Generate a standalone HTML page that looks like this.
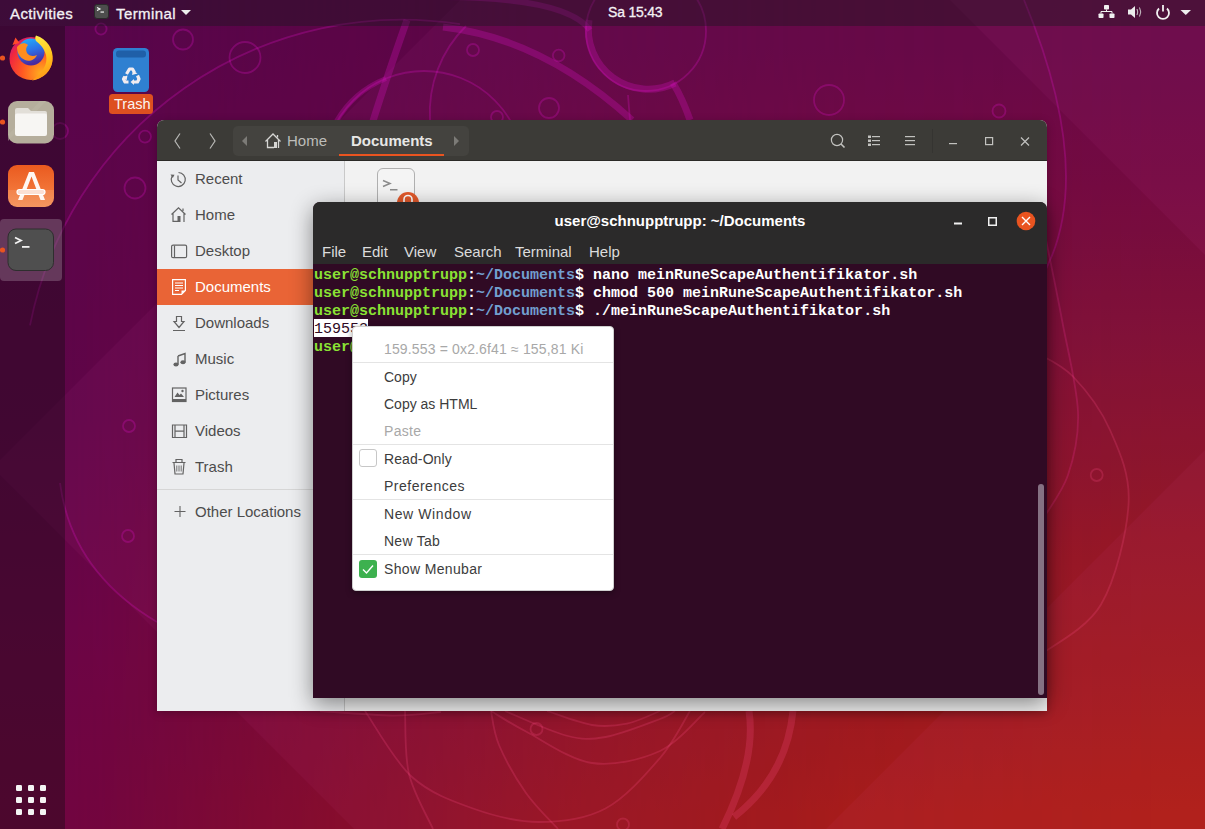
<!DOCTYPE html>
<html><head><meta charset="utf-8">
<style>
*{box-sizing:border-box;margin:0;padding:0}
html,body{width:1205px;height:829px;overflow:hidden;background:#5a004c}
body{position:relative;font-family:"Liberation Sans",sans-serif}
.abs{position:absolute}
#wp{left:0;top:0;width:1205px;height:829px;background:linear-gradient(to bottom,rgb(79,0,70) 0px,rgb(85,0,68) 220px,rgb(89,0,66) 427px,rgb(100,0,64) 627px,rgb(107,0,58) 829px)}
#wp2{left:0;top:0;width:1205px;height:829px;
 background:linear-gradient(to bottom,rgb(90,0,57) 47px,rgb(104,2,50) 187px,rgb(118,9,40) 337px,rgb(143,16,19) 567px,rgb(167,24,0) 812px);
 -webkit-mask-image:linear-gradient(to right,rgba(0,0,0,0) 65px,rgba(0,0,0,.35) 330px,rgba(0,0,0,.62) 570px,rgba(0,0,0,.86) 850px,#000 1205px);
 mask-image:linear-gradient(to right,rgba(0,0,0,0) 65px,rgba(0,0,0,.35) 330px,rgba(0,0,0,.62) 570px,rgba(0,0,0,.86) 850px,#000 1205px)}
#topbar{left:0;top:0;width:1205px;height:26px;background:rgba(15,27,23,.35);color:#fff}
#dock{left:0;top:26px;width:65px;height:803px;background:rgba(10,10,12,.36)}
.tb{position:absolute;top:0;height:26px;line-height:26px;font-weight:normal;color:#f4f2f4;white-space:nowrap;-webkit-text-stroke:0.3px #f4f2f4}
/* nautilus */
#naut{left:157px;top:120px;width:890px;height:591px;border-radius:7px 7px 0 0;overflow:hidden;background:#f2f2f2;box-shadow:0 2px 9px rgba(0,0,0,.25)}
#nhead{left:0;top:0;width:890px;height:41px;background:#3c3b37;border-bottom:1px solid #2b2a27}
#side{left:0;top:41px;width:188px;height:550px;background:#ecedef;border-right:1px solid #c9c9c9}
.si{position:absolute;left:0;width:188px;height:36px;line-height:36px;font-size:15px;color:#4c4c4c}
.si span{position:absolute;left:38px}
.si svg{position:absolute;left:13px;top:10px}
.si.sel{background:#e96436;color:#fff}
/* terminal */
#term{left:313px;top:202px;width:734px;height:496px;border-radius:7px 7px 0 0;overflow:hidden;background:#300a24;box-shadow:0 6px 22px rgba(0,0,0,.45)}
#thead{left:0;top:0;width:734px;height:62px;background:#2b2a2a}
.mi{position:absolute;top:39px;font-size:15px;color:#dcdcdc;line-height:22px}
#tx{left:1px;top:65px;font-family:"Liberation Mono",monospace;font-weight:bold;font-size:15px;line-height:18px;color:#fff;white-space:pre}
.g{color:#8ae234}.b{color:#729fcf}
/* menu */
#menu{left:352px;top:326px;width:262px;height:265px;background:#fff;border:1px solid #cfcfcf;border-radius:4px;box-shadow:0 2px 6px rgba(0,0,0,.35)}
.it{position:absolute;left:0;width:260px;height:27px;font-size:14px;line-height:27px;color:#3c3c3c}
.it span{position:absolute;left:31px;top:1px}
.sep{position:absolute;left:0;width:260px;height:1px;background:#e4e4e4}
</style></head><body>
<div id="wp" class="abs"></div>
<div id="wp2" class="abs"></div>
<svg id="wpl" class="abs" style="left:0;top:0" width="1205" height="829" viewBox="0 0 1205 829">
<g fill="#ff70d0" fill-opacity="0.048">
<polygon points="460,0 1205,0 1205,829 0,829 0,460"/>
<polygon points="1205,450 1205,829 826,829"/>
<polygon points="0,0 1205,0 1205,829 354,829 0,475"/>
<polygon points="950,0 1205,0 1205,255"/>
</g>
<g fill="none">
<path stroke="#d010b8" stroke-opacity="0.30" d="M30 325.4 A378.7 378.7 0 0 1 460 24.2" stroke-width="1.8"/>
<path stroke="#d010b8" stroke-opacity="0.30" d="M466 26 A122 122 0 0 0 430 120" stroke-width="1.8"/>
<path stroke="#d010b8" stroke-opacity="0.30" d="M1024 0 Q1099.0 181.0 1040 280" stroke-width="1.8"/>
<path stroke="#ff4f8a" stroke-opacity="0.22" d="M365.0 711.0 C372.8 722.0 394.0 760.8 412.0 777.0 C430.0 793.2 451.8 801.0 473.0 808.5 C494.2 816.0 516.9 822.0 539.0 822.0 C561.1 822.0 585.3 819.2 605.5 808.5 C625.7 797.8 645.9 774.2 660.0 758.0 C674.1 741.8 685.0 718.8 690.0 711.0" stroke-width="1.8"/>
<path stroke="#ff4f8a" stroke-opacity="0.22" d="M405.0 711.0 C405.7 721.5 404.3 754.3 409.0 774.0 C413.7 793.7 429.0 819.8 433.0 829.0" stroke-width="1.8"/>
<path stroke="#ff4f8a" stroke-opacity="0.22" d="M491.0 711.0 C492.3 716.7 493.2 731.3 499.0 745.0 C504.8 758.7 516.2 779.0 526.0 793.0 C535.8 807.0 552.7 823.0 558.0 829.0" stroke-width="1.8"/>
<path stroke="#ff4f8a" stroke-opacity="0.22" d="M491.0 711.0 C496.8 714.4 509.2 722.8 526.0 731.5 C542.8 740.2 569.7 759.8 592.0 763.0 C614.3 766.2 641.2 759.5 660.0 751.0 C678.8 742.5 697.5 718.5 705.0 712.0" stroke-width="1.8"/>
<path stroke="#ff4f8a" stroke-opacity="0.22" d="M505.0 711.0 C515.2 715.1 549.2 731.2 566.0 735.5 C582.8 739.8 589.8 739.8 605.5 737.0 C621.2 734.2 648.4 723.3 660.0 719.0 C671.6 714.7 672.5 712.3 675.0 711.0" stroke-width="1.8"/>
<path stroke="#ff4f8a" stroke-opacity="0.22" d="M547.0 711.0 C554.5 713.3 578.7 722.9 592.0 725.0 C605.3 727.1 615.7 725.9 627.0 723.6 C638.3 721.3 654.5 713.1 660.0 711.0" stroke-width="1.8"/>
<path stroke="#ff4f8a" stroke-opacity="0.22" d="M320.0 711.0 C332.2 711.8 372.8 715.4 393.0 715.6 C413.2 715.8 433.0 712.6 441.0 712.0" stroke-width="1.8"/>
<path stroke="#d010b8" stroke-opacity="0.30" d="M60 483 Q71.5 571.5 157 622" stroke-width="1.8"/>
<path stroke="#d010b8" stroke-opacity="0.30" d="M628 95 Q629.0 108.5 630 120" stroke-width="1.8"/>
<path stroke="#e8308f" stroke-opacity="0.26" d="M1046.0 240.0 C1048.7 253.3 1056.7 291.3 1062.0 320.0 C1067.3 348.7 1077.0 386.2 1078.0 412.0 C1079.0 437.8 1074.3 456.5 1068.0 475.0 C1061.7 493.5 1044.7 515.0 1040.0 523.0" stroke-width="1.8"/>
<path stroke="#ff4f8a" stroke-opacity="0.22" d="M1035.0 352.0 C1041.3 356.1 1060.5 363.5 1073.0 376.5 C1085.5 389.5 1100.7 408.9 1110.0 430.0 C1119.3 451.1 1130.1 473.9 1128.6 503.0 C1127.1 532.1 1115.8 579.2 1101.0 604.5 C1086.2 629.8 1050.2 646.6 1040.0 655.0" stroke-width="1.8"/>
<circle stroke="#d010b8" stroke-opacity="0.30" cx="101" cy="29" r="5.6" stroke-width="1.8"/>
<circle stroke="#d010b8" stroke-opacity="0.30" cx="183" cy="39.5" r="10" stroke-width="1.8"/>
<circle stroke="#d010b8" stroke-opacity="0.30" cx="245" cy="57.5" r="15.5" stroke-width="1.8"/>
<circle stroke="#d010b8" stroke-opacity="0.30" cx="145" cy="136.6" r="6" stroke-width="1.8"/>
<circle stroke="#d010b8" stroke-opacity="0.30" cx="135" cy="188" r="10.5" stroke-width="1.8"/>
<circle stroke="#d010b8" stroke-opacity="0.30" cx="60" cy="131" r="8" stroke-width="1.8"/>
<circle stroke="#d010b8" stroke-opacity="0.30" cx="473" cy="50" r="6" stroke-width="1.8"/>
<circle stroke="#d010b8" stroke-opacity="0.30" cx="558.7" cy="55.5" r="5.8" stroke-width="1.8"/>
<circle stroke="#d010b8" stroke-opacity="0.30" cx="549" cy="108" r="10" stroke-width="1.8"/>
<circle stroke="#d010b8" stroke-opacity="0.30" cx="497" cy="117" r="6" stroke-width="1.8"/>
<circle stroke="#d010b8" stroke-opacity="0.30" cx="829" cy="100" r="15" stroke-width="1.8"/>
<circle stroke="#d010b8" stroke-opacity="0.30" cx="999" cy="111" r="6.5" stroke-width="1.8"/>
<circle stroke="#d010b8" stroke-opacity="0.30" cx="129" cy="426" r="6" stroke-width="1.8"/>
<circle stroke="#d010b8" stroke-opacity="0.30" cx="128" cy="536" r="6" stroke-width="1.8"/>
<circle stroke="#ff4f8a" stroke-opacity="0.22" cx="536.5" cy="729" r="6" stroke-width="1.8"/>
<circle stroke="#ff4f8a" stroke-opacity="0.22" cx="623" cy="824.5" r="6" stroke-width="1.8"/>
<circle stroke="#ff4f8a" stroke-opacity="0.22" cx="1096.7" cy="475" r="6" stroke-width="1.8"/>
<circle stroke="#d010b8" stroke-opacity="0.30" cx="424" cy="171" r="100" stroke-width="1.8"/>
<path stroke="#d010b8" stroke-opacity="0.30" d="M336 122 A100 100 0 0 1 386 78.5" stroke-width="5"/>
<circle stroke="#d010b8" stroke-opacity="0.30" cx="646" cy="31" r="60" stroke-width="1.8"/>
<path stroke="#d010b8" stroke-opacity="0.30" d="M373 121 Q386.0 79.5 407 20" stroke-width="7"/>
<path stroke="#d010b8" stroke-opacity="0.30" d="M443 27 Q542.5 38.5 632 120" stroke-width="7"/>
<path stroke="#d010b8" stroke-opacity="0.30" d="M673 83 Q682.5 98.5 690 120" stroke-width="7"/>
<path stroke="#ff4f8a" stroke-opacity="0.22" d="M749 711 Q756.5 760.0 722 829" stroke-width="7"/>
<path stroke="#ff4f8a" stroke-opacity="0.22" d="M793 711 Q786.5 776.0 734 817" stroke-width="7"/>
<path stroke="#d010b8" stroke-opacity="0.30" d="M589 20 A60 60 0 0 0 675 83" stroke-width="7"/>
<path stroke="#d010b8" stroke-opacity="0.30" d="M430 -3 Q565 -4 590 30" stroke-width="6"/>

</g></svg>

<div id="topbar" class="abs">
 <svg class="abs" style="left:0;top:0" width="1205" height="26">
  <rect x="94.5" y="4.5" width="14" height="14" rx="2.5" fill="#4d4d4d" stroke="#2a2a2a" stroke-width="1"/>
  <path d="M97 7.5 L100 9 L97 10.5" fill="none" stroke="#fff" stroke-width="1.1"/>
  <rect x="100.5" y="11.5" width="3.5" height="1.1" fill="#fff"/>
  <path d="M181 10 H191 L186 15Z" fill="#eeeeee"/>
  <g fill="#f0f0f0">
   <rect x="1104" y="5" width="5" height="4.5" rx="0.8"/>
   <rect x="1098.5" y="13.5" width="5" height="4.5" rx="0.8"/>
   <rect x="1109.5" y="13.5" width="5" height="4.5" rx="0.8"/>
  </g>
  <path d="M1106.5 9.5 V11.5 M1101 13.5 V11.5 H1112 V13.5" fill="none" stroke="#f0f0f0" stroke-width="1"/>
  <path d="M1128 9.5 H1131 L1135 6 V18 L1131 14.5 H1128Z" fill="#ececec"/>
  <path d="M1137 9 Q1138.5 12 1137 15 M1139.5 7.5 Q1142 12 1139.5 16.5" fill="none" stroke="#d8d8d8" stroke-width="0.9"/>
  <path d="M1159 8.5 A6 6 0 1 0 1167 8.5" fill="none" stroke="#f2f2f2" stroke-width="1.8"/>
  <path d="M1163 5 V11.5" stroke="#f2f2f2" stroke-width="1.8"/>
  <path d="M1180.5 10 H1191 L1185.75 15Z" fill="#eeeeee"/>
 </svg>

 <div class="tb" style="left:10px;top:1px;font-size:15px;letter-spacing:0.4px">Activities</div>
 
 <div class="tb" style="left:116px;top:1px;font-size:15px;letter-spacing:0.4px">Terminal</div>
 <div class="tb" style="left:608px;top:-1px;font-size:14px;letter-spacing:-0.2px">Sa 15:43</div>
</div>
<div id="dock" class="abs"></div>
<svg class="abs" style="left:0;top:0" width="65" height="829" viewBox="0 0 65 829">
 <defs>
  <radialGradient id="ffo" cx="0.7" cy="0.25" r="0.9">
   <stop offset="0" stop-color="#ffe847"/><stop offset="0.35" stop-color="#ffb021"/><stop offset="0.7" stop-color="#ff4a2f"/><stop offset="1" stop-color="#d92f7d"/>
  </radialGradient>
  <radialGradient id="ffb" cx="0.5" cy="0.3" r="0.7">
   <stop offset="0" stop-color="#00c8ff"/><stop offset="0.6" stop-color="#2f6bea"/><stop offset="1" stop-color="#5a2a9e"/>
  </radialGradient>
  <linearGradient id="sw" x1="0" y1="0" x2="0" y2="1">
   <stop offset="0" stop-color="#ea5a1f"/><stop offset="0.6" stop-color="#f27538"/><stop offset="0.6" stop-color="#f2844c"/><stop offset="1" stop-color="#f49660"/>
  </linearGradient>
 </defs>
 <!-- firefox -->
 <defs>
  <radialGradient id="ffr" cx="0.75" cy="0.85" r="1">
   <stop offset="0" stop-color="#ffb01f"/><stop offset="0.45" stop-color="#ff5a22"/><stop offset="0.8" stop-color="#f0263f"/><stop offset="1" stop-color="#c8197f"/>
  </radialGradient>
  <linearGradient id="ffg" x1="0" y1="0" x2="0.3" y2="1">
   <stop offset="0" stop-color="#1fb8ff"/><stop offset="0.55" stop-color="#2d6fe6"/><stop offset="1" stop-color="#4a2aa0"/>
  </linearGradient>
  <linearGradient id="ffy" x1="0" y1="0" x2="0.2" y2="1">
   <stop offset="0" stop-color="#fff04a"/><stop offset="0.6" stop-color="#ffc21a"/><stop offset="1" stop-color="#ff9a1a"/>
  </linearGradient>
 </defs>
 <circle cx="31" cy="58.5" r="21.5" fill="url(#ffr)"/>
 <circle cx="31" cy="52" r="13.5" fill="url(#ffg)"/>
 <path d="M17 47 C20 43 25 42 28 45 C26 47 25.5 50 27 53 C29 56 33 57 37 55 C35 60 29 62 25 60 C20 58 17 53 17 47Z" fill="#ff8d1e"/>
 <path d="M36 35.5 C47 39 54 49 52.5 61 C51 71 43 79 32 80.5 C43 73 48 64 46 55 C44 48 40 44 36 41 C35 39 35 37 36 35.5Z" fill="url(#ffy)"/>
 <path d="M12.5 45 L15.5 37.5 L19.5 43Z" fill="#ff4a2a"/>
 <circle cx="2.5" cy="58" r="2.6" fill="#e95420"/>
 <!-- files -->
 <rect x="8" y="101" width="46" height="42.5" rx="9" fill="#b5ae9c"/>
 <path d="M8 135 L40 101 H46 L8 141Z" fill="#bdb7a6" opacity="0.5"/>
 <path d="M17 108 H28 L31 111 H45 A2 2 0 0 1 47 113 V120 H15 V110 A2 2 0 0 1 17 108Z" fill="#e2dfd8"/>
 <rect x="15" y="113.5" width="32" height="22.5" rx="2" fill="#f7f6f3"/>
 <circle cx="2.5" cy="122" r="2.6" fill="#e95420"/>
 <!-- software -->
 <rect x="8" y="165" width="46" height="42" rx="9" fill="url(#sw)"/>
 <path d="M18 200 L29 172 H34 L45 200 H40.5 L31.5 176.5 L22.5 200Z" fill="#fff7f2"/>
 <rect x="17" y="189.5" width="28" height="5" rx="2.5" fill="#fbe0d4" stroke="#fff" stroke-width="1.2"/>
 <!-- terminal active -->
 <rect x="0" y="219" width="62" height="62" rx="4" fill="rgba(255,255,255,0.2)"/>
 <rect x="8" y="229" width="45.5" height="41.5" rx="8" fill="#4f4f4f" stroke="#2e2e2e" stroke-width="1"/>
 <path d="M15 237.5 L21 240.5 L15 243.5" fill="none" stroke="#f2f2f2" stroke-width="1.8"/>
 <rect x="22" y="246" width="7.5" height="1.8" fill="#f2f2f2"/>
 <circle cx="2.5" cy="250" r="2.6" fill="#e95420"/>
 <!-- app grid -->
 <g fill="#f4f4f4">
  <rect x="16" y="785" width="6" height="6" rx="1.2"/><rect x="28" y="785" width="6" height="6" rx="1.2"/><rect x="40" y="785" width="6" height="6" rx="1.2"/>
  <rect x="16" y="797" width="6" height="6" rx="1.2"/><rect x="28" y="797" width="6" height="6" rx="1.2"/><rect x="40" y="797" width="6" height="6" rx="1.2"/>
  <rect x="16" y="809" width="6" height="6" rx="1.2"/><rect x="28" y="809" width="6" height="6" rx="1.2"/><rect x="40" y="809" width="6" height="6" rx="1.2"/>
 </g>
</svg>
<!-- desktop trash -->
<svg class="abs" style="left:100px;top:40px" width="60" height="80" viewBox="100 40 60 80">
 <rect x="113" y="48" width="36" height="44" rx="4.5" fill="#2f80d1"/>
 <rect x="116" y="50.5" width="30" height="7" rx="3" fill="#1f5fa8"/>
 <g fill="none" stroke="#f2ecf0" stroke-width="3.2" stroke-linejoin="round">
  <path d="M126.5 74 L129.5 69 H132.5 L134.5 72.5"/>
  <path d="M137.5 75.5 L139 79 L137.5 82 H133"/>
  <path d="M128.5 82 H125 L123.5 79 L125 76.5"/>
 </g>
 <g fill="#f2ecf0"><path d="M133 70.5 L137.5 73.5 L132 75Z"/><path d="M134 79 L130.5 82 L134 85Z"/><path d="M122.5 77 L127.5 75.5 L126.5 80.5Z"/></g>
 <rect x="109" y="94" width="44" height="20" rx="3.5" fill="#dd5020"/>
 <text x="132.3" y="108.7" font-size="14.6" fill="#fbf4f0" text-anchor="middle" font-family="Liberation Sans">Trash</text>
</svg>


<!-- nautilus -->
<div id="naut" class="abs">
 <div id="nhead" class="abs"></div>
 <div id="side" class="abs">
  <div class="si" style="top:0"><span>Recent</span></div>
  <div class="si" style="top:36px"><span>Home</span></div>
  <div class="si" style="top:72px"><span>Desktop</span></div>
  <div class="si sel" style="top:108px"><span>Documents</span></div>
  <div class="si" style="top:144px"><span>Downloads</span></div>
  <div class="si" style="top:180px"><span>Music</span></div>
  <div class="si" style="top:216px"><span>Pictures</span></div>
  <div class="si" style="top:252px"><span>Videos</span></div>
  <div class="si" style="top:288px"><span>Trash</span></div>
  <div class="abs" style="left:0;top:328px;width:188px;height:1px;background:#d6d6d6"></div>
  <div class="si" style="top:333px"><span>Other Locations</span></div>
 </div>
</div>


<!-- nautilus header + sidebar icons -->
<svg class="abs" style="left:0;top:0" width="1205" height="829" viewBox="0 0 1205 829">
 <g fill="none" stroke="#b9b9b6" stroke-width="1.2">
  <path d="M180 133.5 L175 141 L180 148.5"/>
  <path d="M210 133.5 L215 141 L210 148.5"/>
 </g>
 <rect x="233" y="126" width="236" height="30" rx="5" fill="#44433f"/>
 <path d="M247 136 L242 141 L247 146Z" fill="#7c7b77"/>
 <path d="M454 136 L459 141 L454 146Z" fill="#7c7b77"/>
 <g fill="none" stroke="#d6d6d4" stroke-width="1.3">
  <path d="M265.5 141.5 L273 134 L280.5 141.5"/>
  <path d="M267.5 140 V147.5 H274 M278.5 139.5 V148 M277.5 135 V137.5"/>
 </g>
 <rect x="274" y="142" width="3" height="6" fill="#d6d6d4"/>
 <text x="287" y="146" font-size="15" fill="#bdbdba" font-family="Liberation Sans">Home</text>
 <text x="351" y="146" font-size="15" font-weight="bold" fill="#e7e7e5" font-family="Liberation Sans">Documents</text>
 <rect x="339" y="154" width="105" height="2" fill="#e95420"/>
 <g fill="none" stroke="#c2c2bf" stroke-width="1.2">
  <circle cx="837" cy="140" r="5.6"/>
  <path d="M841 144 L844.5 147.5" stroke-width="1.6"/>
 </g>
 <g fill="#c2c2bf">
  <rect x="868" y="135.5" width="3" height="2.5"/><rect x="868" y="139.5" width="3" height="2.5"/><rect x="868" y="143.5" width="3" height="2.5"/>
  <rect x="872" y="136" width="8" height="1.2"/><rect x="872" y="140" width="8" height="1.2"/><rect x="872" y="144" width="8" height="1.2"/>
  <rect x="905" y="136" width="10" height="1.2"/><rect x="905" y="140" width="10" height="1.2"/><rect x="905" y="144" width="10" height="1.2"/>
  <rect x="932" y="129" width="1" height="24" fill="#353431"/>
  <rect x="949" y="143" width="8" height="1.2"/>
 </g>
 <g fill="none" stroke="#c2c2bf" stroke-width="1.2">
  <rect x="985.6" y="137.6" width="7" height="7"/>
  <path d="M1021 137.5 L1029 145.5 M1029 137.5 L1021 145.5"/>
 </g>
 <!-- sidebar icons -->
 <g fill="none" stroke="#636363" stroke-width="1.2">
  <path d="M172.2 176 A7 7 0 1 0 178.5 172.5"/>
  <path d="M178 175.5 V180 L181.5 183"/>
  <path d="M171.5 214.5 L178.5 207.8 L185.5 214.5 M173 213 V221.3 H178 M184 213 V222 M183 208.5 V211"/>
  <rect x="171.6" y="245.1" width="15" height="12.6" rx="1.5"/>
  <path d="M174.5 245.5 V257.5"/>
  <path d="M176.5 316.5 H181.5 V321.5 H184 L179 327.5 L174 321.5 H176.5Z M173 330.5 H185"/>
  <path d="M172.5 425 H186.5 V437.5 H172.5Z M175 425 V437.5 M184 425 V437.5 M175 431.2 H184"/>
  <path d="M172.5 462.5 H185.5 M176 462 V459.5 H182 V462 M174 463 L175 474 H183 L184 463"/><path d="M176.8 465.5 V471.5 M179 465.5 V471.5 M181.2 465.5 V471.5" stroke-width="0.9"/>
 </g>
 <g fill="#636363">
  <rect x="177.5" y="216" width="3" height="6"/>
  <path d="M170.5 174.5 L174.5 174.8 L172.8 178Z"/>
  <rect x="172.5" y="388" width="13.5" height="13.5" fill="none" stroke="#636363" stroke-width="1.2"/>
  <rect x="172.5" y="399" width="13.5" height="2.8"/>
  <path d="M174.5 397 L177.5 392.5 L179.5 395 L181 393.5 L184 397Z"/>
  <circle cx="182.5" cy="391" r="1.2"/>
  <path d="M178 356 L185 353.5 V362 M178 356 V364.5" fill="none" stroke="#636363" stroke-width="1.4"/>
  <ellipse cx="176" cy="364.5" rx="2.6" ry="2"/><ellipse cx="183" cy="362.2" rx="2.6" ry="2"/>
 </g>
 <g fill="none" stroke="#ffffff" stroke-width="1.2">
  <path d="M172.6 279.6 H185.4 V290.5 L181.5 294.4 H172.6Z"/>
  <path d="M175 283 H183 M175 285.5 H183 M175 288 H183 M175 290.5 H179"/>
 </g>
 <path d="M181.5 294 V290.5 H185.2Z" fill="#ffffff"/>
 <path d="M180 506 V517 M174.5 511.5 H185.5" stroke="#636363" stroke-width="1.1" fill="none"/>
 <!-- file icon in content -->
 <rect x="377.5" y="168.5" width="37" height="40" rx="5.5" fill="#f4f4f4" stroke="#b0b0b0" stroke-width="1"/>
 <path d="M383 180.5 L390 183.5 L383 186.5" fill="none" stroke="#8c8c8c" stroke-width="1.5"/>
 <rect x="390" y="189" width="7.5" height="1.5" fill="#8c8c8c"/>
 <circle cx="408" cy="203" r="11" fill="#e2592b"/>
 <path d="M404 202 V199.5 A4 4 0 0 1 412 199.5 V202" fill="none" stroke="#fff" stroke-width="1.6"/>
</svg>

<!-- terminal -->
<div id="term" class="abs">
 <div id="thead" class="abs">
 <svg class="abs" style="left:0;top:0" width="734" height="62" viewBox="313 202 734 62">
  <rect x="954" y="222.5" width="8" height="2" fill="#f0f0f0"/>
  <rect x="988.75" y="217.75" width="7.5" height="7.5" fill="none" stroke="#f0f0f0" stroke-width="1.5"/>
  <circle cx="1026" cy="221" r="9.3" fill="#e95420"/>
  <path d="M1022 217 L1030 225 M1030 217 L1022 225" stroke="#fff" stroke-width="1.4"/>
 </svg>

  <div class="abs" style="left:0;top:7px;width:734px;text-align:center;font-size:15px;font-weight:bold;color:#fff;line-height:24px">user@schnupptrupp: ~/Documents</div>
  <div class="mi" style="left:9px">File</div>
  <div class="mi" style="left:49px">Edit</div>
  <div class="mi" style="left:91px">View</div>
  <div class="mi" style="left:141px">Search</div>
  <div class="mi" style="left:202px">Terminal</div>
  <div class="mi" style="left:276px">Help</div>
 </div>
 <div class="abs" style="left:1px;top:117px;width:54px;height:18px;background:#fff"></div>
 <div id="tx" class="abs"><span class="g">user@schnupptrupp</span>:<span class="b">~/Documents</span>$ nano meinRuneScapeAuthentifikator.sh
<span class="g">user@schnupptrupp</span>:<span class="b">~/Documents</span>$ chmod 500 meinRuneScapeAuthentifikator.sh
<span class="g">user@schnupptrupp</span>:<span class="b">~/Documents</span>$ ./meinRuneScapeAuthentifikator.sh
<span style="color:#300a24;font-weight:normal">159553</span>
<span class="g">user@schnupptrupp</span>:<span class="b">~/Documents</span>$ </div>
</div>

<div class="abs" style="left:1038px;top:484px;width:6px;height:211px;border-radius:3px;background:#857183"></div>
<!-- menu -->
<div id="menu" class="abs">
 <div class="it" style="top:8px;color:#a8a8a8"><span style="letter-spacing:0.15px">159.553 = 0x2.6f41 ≈ 155,81 Ki</span></div>
 <div class="sep" style="top:35px"></div>
 <div class="it" style="top:36px"><span>Copy</span></div>
 <div class="it" style="top:63px"><span>Copy as HTML</span></div>
 <div class="it" style="top:90px;color:#a8a8a8"><span style="letter-spacing:0.3px">Paste</span></div>
 <div class="sep" style="top:117px"></div>
 <div class="it" style="top:118px"><span style="letter-spacing:0.1px">Read-Only</span></div>
 <div class="abs" style="left:6px;top:122px;width:18px;height:18px;border:1px solid #c7c7c7;border-radius:3px;background:#fff"></div>
 <div class="it" style="top:145px"><span style="letter-spacing:0.5px">Preferences</span></div>
 <div class="sep" style="top:172px"></div>
 <div class="it" style="top:173px"><span style="letter-spacing:0.6px">New Window</span></div>
 <div class="it" style="top:200px"><span style="letter-spacing:0.25px">New Tab</span></div>
 <div class="sep" style="top:227px"></div>
 <div class="it" style="top:228px"><span style="letter-spacing:0.35px">Show Menubar</span></div>
 <svg class="abs" style="left:6px;top:233px" width="18" height="18"><rect x="0" y="0" width="18" height="18" rx="3" fill="#3db14f"/><path d="M4 9.5 L7.5 13 L14 5.5" fill="none" stroke="#fff" stroke-width="1.4"/></svg>
</div>
</body></html>
